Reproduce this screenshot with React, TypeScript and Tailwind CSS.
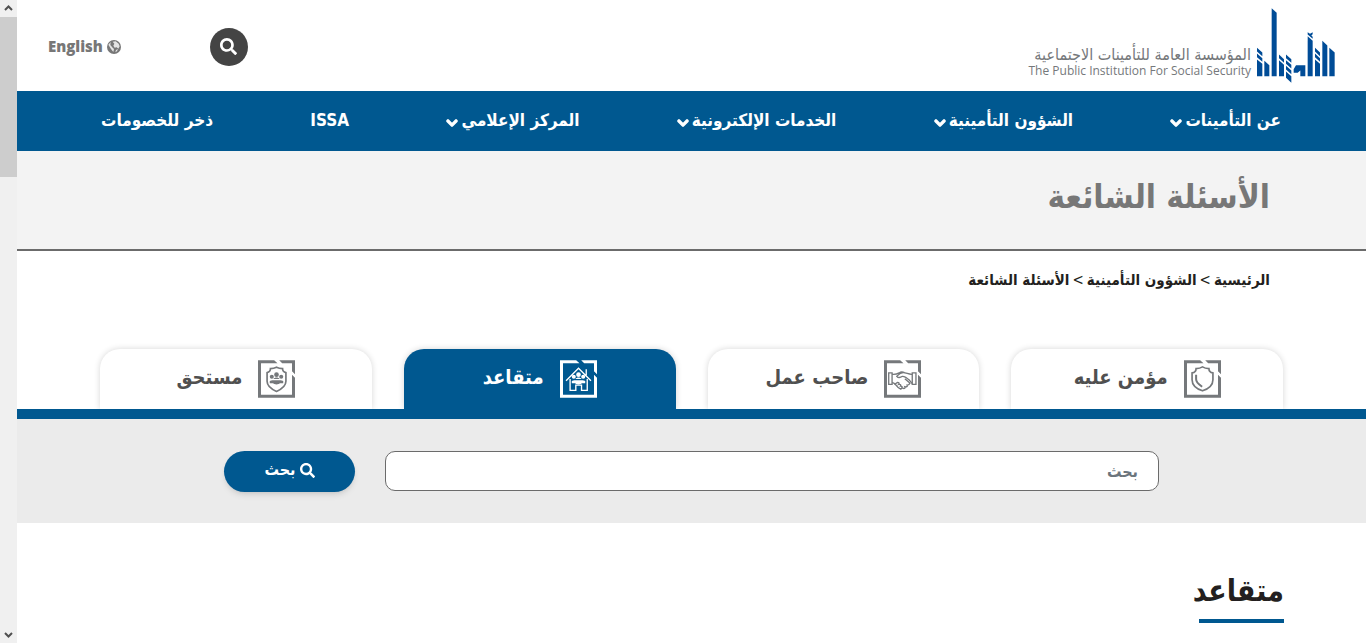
import { useState } from 'react'
import { FaChevronDown, FaSearch } from 'react-icons/fa'

const NAV_ITEMS = [
  { label: 'عن التأمينات', hasMenu: true },
  { label: 'الشؤون التأمينية', hasMenu: true },
  { label: 'الخدمات الإلكترونية', hasMenu: true },
  { label: 'المركز الإعلامي', hasMenu: true },
  { label: 'ISSA', hasMenu: false },
  { label: 'ذخر للخصومات', hasMenu: false },
]

const CRUMBS = ['الرئيسية', 'الشؤون التأمينية', 'الأسئلة الشائعة']

function LogoMark() {
  return (
    <svg viewBox="0 0 234 224" className="h-[75px] w-[78px] shrink-0 fill-[#004c97]" aria-hidden="true">
      <path d="M0 119l16 14v11L0 130zM0 136l16 14v11L0 147zM0 154l16 13v37H0z" />
      <path d="M22 158l15 13v33H22z" />
      <path d="M44 0l15 14v190H44z" />
      <path d="M66 139l15 14v11L66 150zM66 156l15 14v34H66z" />
      <path d="M87 139l16 14v11L87 150zM87 156l16 14v11L87 167zM87 173l16 14v11L87 184zM87 190l16 14v20L87 209z" />
      <path d="M110 183l7-12h28v33h-15v-17l-8 7h-12z" />
      <path d="M152 84l15 14v106h-15z" />
      <path d="M152 72l7 5 8-5v6l-4 4 4 4v6l-15-13z" />
      <path d="M174 119l15 14v11l-15-14zM174 136l15 14v11l-15-14zM174 154l15 13v37h-15z" />
      <path d="M196 98l15 14v92h-15z" />
      <path d="M217 119l16 14v71h-16z" />
    </svg>
  )
}

function GlobeIcon() {
  return (
    <svg viewBox="0 0 42 42" className="size-3.5 shrink-0" aria-hidden="true">
      <circle cx="21" cy="21" r="21" fill="currentColor" />
      <path d="M17 5l9-1 9 7 3 8-4 7-5-4-6 1-4-6 3-6zM4 14l7-8-1 9 7 8 4 4-2 9-7-9zM27 30l6-3-3 7-5 3z" fill="#fff" opacity="0.8" />
    </svg>
  )
}

function IconFrame({ children }: { children: React.ReactNode }) {
  return (
    <svg viewBox="0 0 110 112" className="h-[38px] w-[37px] shrink-0" fill="none" stroke="currentColor" strokeWidth="5" aria-hidden="true">
      <path
        d="M0 0h48l10 9H9v94h92V43l9 9v60H0zM63 0h47v42l-9-9V9H72z"
        fill="currentColor"
        stroke="none"
      />
      {children}
    </svg>
  )
}

function ShieldIcon() {
  return (
    <IconFrame>
      <path d="M55 20c-6 4-12 5-19 5 0 7-5 12-12 13v20c0 16 13 27 31 33 18-6 31-17 31-33V38c-7-1-12-6-12-13-7 0-13-1-19-5z" />
      <path d="M36 43v14c0 9 7 15 18 22" strokeWidth="6" />
    </IconFrame>
  )
}

function HandshakeIcon() {
  return (
    <IconFrame>
      <path d="M14 38h10v34H14zM84 38h11v34H84z" strokeWidth="4" />
      <path d="M24 42c8 1 14 0 21-4 4-3 11-3 16-1M84 42c-11 1-17-5-27-5-9 0-14 6-19 11 4 5 11 4 17 0 8 0 15 6 21 12l5 6M24 67c5 0 8 3 11 6M84 67c-2 0-3 1-5 2" strokeWidth="4" />
      <path d="M33 71l7-5c5 0 6 4 4 6 5-1 7 2 5 5 5 0 6 3 4 6l-3 3c-6-3-12-8-17-15zM55 83c6 3 9 0 7-4 6 1 9-2 7-5 6 0 9-4 6-8L62 55" strokeWidth="4" />
    </IconFrame>
  )
}

function PeopleGlyph() {
  return (
    <g fill="currentColor" stroke="none">
      <circle cx="41" cy="49" r="6" />
      <circle cx="69" cy="49" r="6" />
      <circle cx="55" cy="43" r="7" />
      <path d="M46 56c3-6 15-6 18 0z" />
      <path d="M35 62c5-3 9-2 14-2h12c5 0 9-1 14 2v7H65c-3 4-17 4-20 0H35z" />
    </g>
  )
}

function HouseIcon() {
  return (
    <IconFrame>
      <path d="M18 61l37-37 37 37M30 56v34h17V74h17v16h17V56M78 45V27" strokeWidth="4" />
      <PeopleGlyph />
    </IconFrame>
  )
}

function BeneficiaryIcon() {
  return (
    <IconFrame>
      <path d="M55 21c-6 3-12 4-18 4 0 7-4 11-10 12v26c0 14 12 23 28 30 16-7 28-16 28-30V37c-6-1-10-5-10-12-6 0-12-1-18-4z" />
      <PeopleGlyph />
    </IconFrame>
  )
}

const TABS = [
  { id: 'insured', label: 'مؤمن عليه', icon: ShieldIcon },
  { id: 'employer', label: 'صاحب عمل', icon: HandshakeIcon },
  { id: 'retired', label: 'متقاعد', icon: HouseIcon },
  { id: 'beneficiary', label: 'مستحق', icon: BeneficiaryIcon },
]

function ScrollRail() {
  return (
    <div className="sticky top-0 flex h-screen w-[17px] shrink-0 flex-col items-center bg-[#f0f0f0] text-[#505050]" aria-hidden="true">
      <svg viewBox="0 0 17 17" className="h-[17px] w-[17px] shrink-0" fill="none" stroke="currentColor" strokeWidth="2">
        <path d="M5 10l3.5-3.5L12 10" />
      </svg>
      <div className="h-40 w-full bg-[#cdcdcd]" />
      <svg viewBox="0 0 17 17" className="mt-auto h-[17px] w-[17px] shrink-0" fill="none" stroke="currentColor" strokeWidth="2">
        <path d="M5 7l3.5 3.5L12 7" />
      </svg>
    </div>
  )
}

export default function App() {
  const [activeTab, setActiveTab] = useState('retired')
  const [query, setQuery] = useState('')
  const current = TABS.find(tab => tab.id === activeTab) ?? TABS[0]

  return (
    <div className="flex bg-white font-['DejaVu_Sans_Condensed','DejaVu_Sans',sans-serif]">
      <ScrollRail />

      <div dir="rtl" className="min-w-0 flex-1">
        {/* Header */}
        <header className="flex h-[91px] items-center justify-between px-[31px]">
          <a href="#" className="flex items-center gap-1.5">
            <LogoMark />
            <span className="flex flex-col items-start pt-[34px] whitespace-nowrap text-[#75787b]">
              <span className="text-base leading-4">المؤسسة العامة للتأمينات الاجتماعية</span>
              <span dir="ltr" className="font-['Open_Sans',sans-serif] text-xs leading-4">The Public Institution For Social Security</span>
            </span>
          </a>
          <div className="flex items-center gap-[89px] pt-0.5">
            <button type="button" aria-label="بحث" className="flex size-[38px] items-center justify-center rounded-full bg-[#444] text-white">
              <FaSearch className="size-[17px]" />
            </button>
            <a href="#" className="flex items-center gap-1 font-['Open_Sans',sans-serif] text-[15px] font-extrabold text-[#777]">
              <GlobeIcon />
              English
            </a>
          </div>
        </header>

        {/* Main menu */}
        <nav className="flex h-[60px] items-center justify-between bg-[#005890] pr-[85px] pl-[84px] text-[17px] font-bold text-white">
          {NAV_ITEMS.map(item => (
            <a key={item.label} href="#" className="flex items-center gap-[3px] whitespace-nowrap">
              {item.label}
              {item.hasMenu && <FaChevronDown className="mt-1 size-3 stroke-current stroke-[60]" />}
            </a>
          ))}
        </nav>

        {/* Page title */}
        <div className="h-[100px] border-b-2 border-[#6b6b6b] bg-[#f3f3f3] px-24 pt-[22px]">
          <h1 className="text-[33px] leading-[48px] font-bold text-[#777]">الأسئلة الشائعة</h1>
        </div>

        <nav aria-label="مسار التنقل" className="flex h-[58px] items-center gap-[3px] px-24 text-[15px] font-bold text-[#231f20]">
          {CRUMBS.map((crumb, i) => (
            <span key={crumb} className="flex gap-[3px]">
              {i > 0 && <span className="font-normal">&gt;</span>}
              <a href="#">{crumb}</a>
            </span>
          ))}
        </nav>

        {/* Tabs */}
        <div role="tablist" className="grid grid-cols-4 gap-8 border-b-[10px] border-[#005890] px-[83px] pt-10">
          {TABS.map(({ id, label, icon: Icon }) => (
            <button
              key={id}
              type="button"
              role="tab"
              aria-selected={id === activeTab}
              onClick={() => setActiveTab(id)}
              className={`flex h-[60px] items-center justify-center gap-4 rounded-t-[20px] text-xl font-bold shadow-[0_0_6px_rgba(0,0,0,0.16)] [clip-path:inset(-8px_-8px_0_-8px)] ${
                id === activeTab ? 'bg-[#005890] text-white' : 'bg-white text-[#75787b]'
              }`}
            >
              <Icon />
              <span className={`pb-1 ${id === activeTab ? 'text-white' : 'text-[#505050]'}`}>{label}</span>
            </button>
          ))}
        </div>

        {/* Search */}
        <form className="flex h-[104px] items-center gap-[30px] bg-[#ebebeb] px-[207px]" onSubmit={e => e.preventDefault()}>
          <input
            type="text"
            value={query}
            onChange={e => setQuery(e.target.value)}
            placeholder="بحث"
            aria-label="بحث"
            className="h-10 min-w-0 flex-1 rounded-[10px] border border-[#6b6b6b] bg-white px-5 text-base font-bold text-[#231f20] placeholder:text-[#6c757d]"
          />
          <button type="submit" className="flex h-[41px] w-[131px] items-center justify-center gap-1 rounded-full bg-[#005890] pb-0.5 text-base font-bold text-white shadow-md">
            <FaSearch className="size-[15px]" />
            بحث
          </button>
        </form>

        {/* Section heading */}
        <section className="flex px-[82px] pt-11 pb-5">
          <h2 className="relative pb-2 text-[30px] leading-[48px] font-bold text-[#231f20] after:absolute after:right-0 after:bottom-0 after:h-1 after:w-[85px] after:bg-[#005890]">
            {current.label}
          </h2>
        </section>
      </div>
    </div>
  )
}
